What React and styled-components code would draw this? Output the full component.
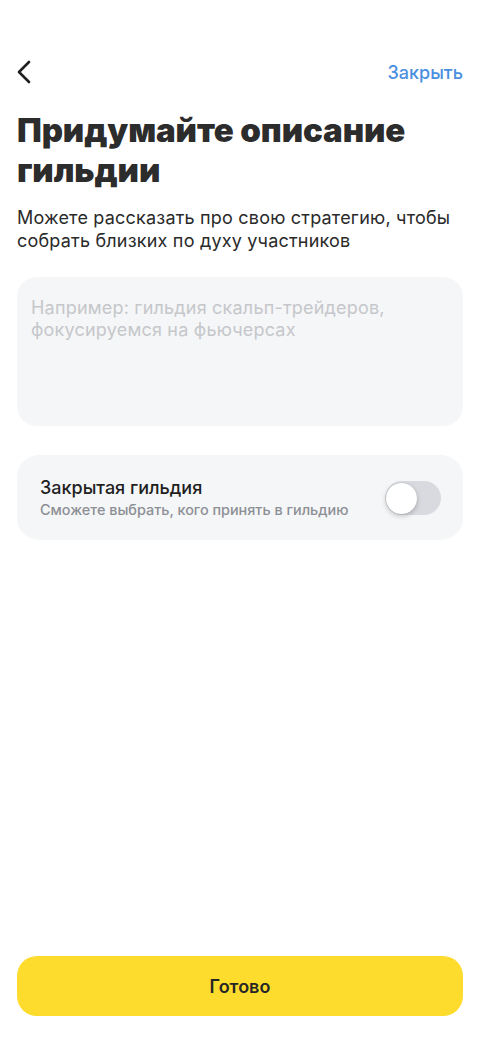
import React, { useState } from 'react';
import styled, { createGlobalStyle } from 'styled-components';

const GlobalStyle = createGlobalStyle`
  html, body {
    margin: 0;
    padding: 0;
    background: #ffffff;
  }
  body {
    font-family: Inter, "Noto Sans", sans-serif;
    -webkit-font-smoothing: antialiased;
  }
`;

const Screen = styled.div`
  display: flex;
  flex-direction: column;
  width: 480px;
  height: 1043px;
  box-sizing: border-box;
  padding: 0 17px;
  background: #ffffff;
  color: #1f1f1f;
`;

const TopBar = styled.div`
  display: flex;
  align-items: center;
  justify-content: space-between;
  height: 44px;
  margin-top: 50px;
`;

const BackButton = styled.button`
  display: flex;
  align-items: center;
  border: 0;
  background: none;
  padding: 0;
  cursor: pointer;
`;

const CloseLink = styled.button`
  border: 0;
  background: none;
  padding: 0;
  font-family: Inter, sans-serif;
  font-size: 18px;
  font-weight: 500;
  color: #4a8fe0;
  cursor: pointer;
`;

const Title = styled.h1`
  margin: 16px 0 0;
  font-family: Inter, sans-serif;
  font-size: 33px;
  font-weight: 900;
  line-height: 40px;
  letter-spacing: -0.1px;
  color: #2c2c2c;
`;

const Subtitle = styled.p`
  margin: 16px 0 0;
  font-size: 18px;
  line-height: 23px;
  letter-spacing: 0.2px;
  color: #2a2a2a;
`;

const DescriptionField = styled.textarea`
  display: block;
  margin-top: 25px;
  width: 100%;
  height: 149px;
  box-sizing: border-box;
  padding: 20px 14px;
  border: 0;
  border-radius: 20px;
  background: #f5f6f7;
  resize: none;
  outline: none;
  font-family: Inter, sans-serif;
  font-size: 18px;
  line-height: 22px;
  letter-spacing: 0.2px;
  color: #262626;

  &::placeholder {
    color: #c5c7cb;
  }
`;

const OptionCard = styled.div`
  display: flex;
  align-items: center;
  justify-content: space-between;
  margin-top: 29px;
  height: 85px;
  box-sizing: border-box;
  padding: 0 22px 0 23px;
  border-radius: 22px;
  background: #f5f6f7;
`;

const OptionText = styled.div`
  display: flex;
  flex-direction: column;
  gap: 3px;
`;

const OptionTitle = styled.span`
  font-size: 18px;
  font-weight: 500;
  line-height: 21px;
  color: #1f1f1f;
`;

const OptionHint = styled.span`
  font-size: 14.4px;
  font-weight: 500;
  line-height: 17px;
  color: #8c8f95;
`;

const Switch = styled.button`
  position: relative;
  width: 56px;
  height: 34px;
  border: 0;
  padding: 0;
  border-radius: 17px;
  background: ${(p) => (p.$on ? '#34c759' : '#d8dadf')};
  cursor: pointer;
  transition: background 0.2s;
`;

const Knob = styled.span`
  position: absolute;
  top: 2px;
  left: ${(p) => (p.$on ? '24px' : '1px')};
  width: 31px;
  height: 31px;
  border-radius: 50%;
  background: #ffffff;
  box-shadow: 0 2px 5px rgba(0, 0, 0, 0.22), 0 0 1px rgba(0, 0, 0, 0.15);
  transition: left 0.2s;
`;

const Spacer = styled.div`
  flex: 1;
`;

const DoneButton = styled.button`
  margin-bottom: 27px;
  height: 60px;
  border: 0;
  border-radius: 20px;
  background: #fddc2e;
  font-family: Inter, sans-serif;
  font-size: 18px;
  font-weight: 600;
  color: #262626;
  cursor: pointer;
`;

const ChevronLeft = () => (
  <svg width="14" height="24" viewBox="0 0 14 24" fill="none">
    <path
      d="M12 2L2 12l10 10"
      stroke="#1f1f1f"
      strokeWidth="2.6"
      strokeLinecap="round"
      strokeLinejoin="round"
    />
  </svg>
);

const App = () => {
  const [closed, setClosed] = useState(false);

  return (
    <Screen>
      <GlobalStyle />
      <TopBar>
        <BackButton aria-label="Назад">
          <ChevronLeft />
        </BackButton>
        <CloseLink>Закрыть</CloseLink>
      </TopBar>

      <Title>
        Придумайте описание
        <br />
        гильдии
      </Title>
      <Subtitle>
        Можете рассказать про свою стратегию, чтобы собрать близких по духу
        участников
      </Subtitle>

      <DescriptionField placeholder="Например: гильдия скальп-трейдеров, фокусируемся на фьючерсах" />

      <OptionCard>
        <OptionText>
          <OptionTitle>Закрытая гильдия</OptionTitle>
          <OptionHint>Сможете выбрать, кого принять в гильдию</OptionHint>
        </OptionText>
        <Switch $on={closed} onClick={() => setClosed(!closed)}>
          <Knob $on={closed} />
        </Switch>
      </OptionCard>

      <Spacer />
      <DoneButton>Готово</DoneButton>
    </Screen>
  );
};

export default App;
